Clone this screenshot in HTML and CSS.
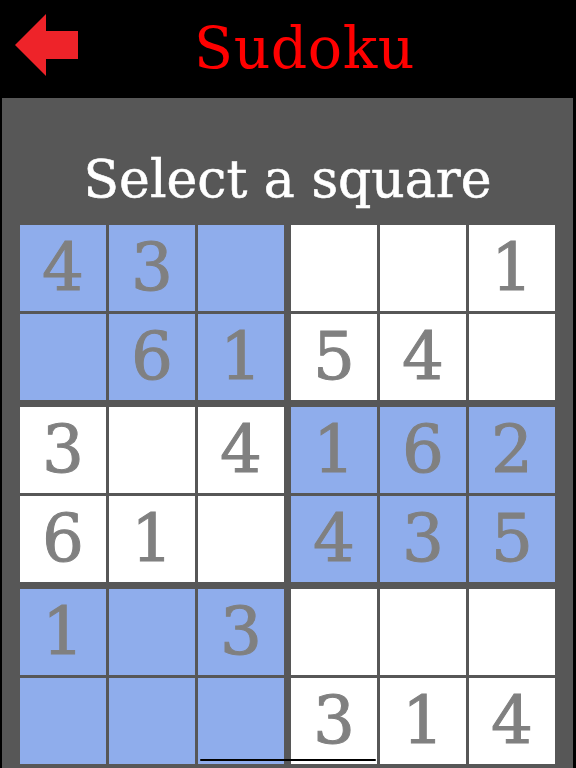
FILE: index.html
```html
<!DOCTYPE html>
<html lang="en">
<head>
<meta charset="utf-8">
<title>Sudoku</title>
<link rel="stylesheet" href="styles.css">
</head>
<body>
<div class="screen">
  <header class="topbar">
    <svg class="back" width="80" height="98" viewBox="0 0 80 98" aria-label="Back">
      <polygon points="15,45 46,14 46,31 78,31 78,59 46,59 46,76" fill="#ee2329"/>
    </svg>
    <h1 class="title">Sudoku</h1>
  </header>
  <main class="panel">
    <p class="prompt">Select a square</p>
    <div class="board">
      <div class="box shaded">
        <div class="cell">4</div><div class="cell">3</div><div class="cell"></div>
        <div class="cell"></div><div class="cell">6</div><div class="cell">1</div>
      </div>
      <div class="box">
        <div class="cell"></div><div class="cell"></div><div class="cell">1</div>
        <div class="cell">5</div><div class="cell">4</div><div class="cell"></div>
      </div>
      <div class="box">
        <div class="cell">3</div><div class="cell"></div><div class="cell">4</div>
        <div class="cell">6</div><div class="cell">1</div><div class="cell"></div>
      </div>
      <div class="box shaded">
        <div class="cell">1</div><div class="cell">6</div><div class="cell">2</div>
        <div class="cell">4</div><div class="cell">3</div><div class="cell">5</div>
      </div>
      <div class="box shaded">
        <div class="cell">1</div><div class="cell"></div><div class="cell">3</div>
        <div class="cell"></div><div class="cell"></div><div class="cell"></div>
      </div>
      <div class="box">
        <div class="cell"></div><div class="cell"></div><div class="cell"></div>
        <div class="cell">3</div><div class="cell">1</div><div class="cell">4</div>
      </div>
    </div>
  </main>
  <div class="home-indicator"></div>
</div>
</body>
</html>
```
FILE: styles.css
```css
html, body {
  margin: 0;
  padding: 0;
  background: #000;
}

.screen {
  position: relative;
  width: 576px;
  height: 768px;
  overflow: hidden;
  display: flex;
  flex-direction: column;
  background: #000;
  font-family: "DejaVu Serif", "Liberation Serif", serif;
}

.topbar {
  height: 98px;
  box-sizing: border-box;
  display: flex;
  align-items: flex-start;
  flex-shrink: 0;
}

.back {
  display: block;
  flex-shrink: 0;
}

.title {
  flex: 1;
  margin: 0;
  padding: 20px 47px 0 0;
  text-align: center;
  color: #ff0000;
  font-weight: normal;
  font-size: 57px;
  line-height: 1;
  letter-spacing: 0.5px;
}

.panel {
  flex: 1;
  margin: 0 3px 0 2px;
  background: #575757;
  display: flex;
  flex-direction: column;
  align-items: center;
}

.prompt {
  margin: 55px 0 20px;
  color: #fff;
  font-size: 52px;
  line-height: 1;
  -webkit-text-stroke: 0.6px #fff;
}

.board {
  display: grid;
  grid-template-columns: 264px 264px;
  gap: 7px;
}

.box {
  display: grid;
  grid-template-columns: repeat(3, 86px);
  grid-auto-rows: 86px;
  gap: 3px;
}

.cell {
  background: #fff;
  color: #808080;
  font-size: 66px;
  line-height: 1;
  display: flex;
  align-items: center;
  justify-content: center;
  -webkit-text-stroke: 1px #808080;
}

.shaded .cell {
  background: #8fadec;
}

.home-indicator {
  position: absolute;
  left: 200px;
  top: 759px;
  width: 176px;
  height: 2px;
  border-radius: 1px;
  background: #000;
}
```
